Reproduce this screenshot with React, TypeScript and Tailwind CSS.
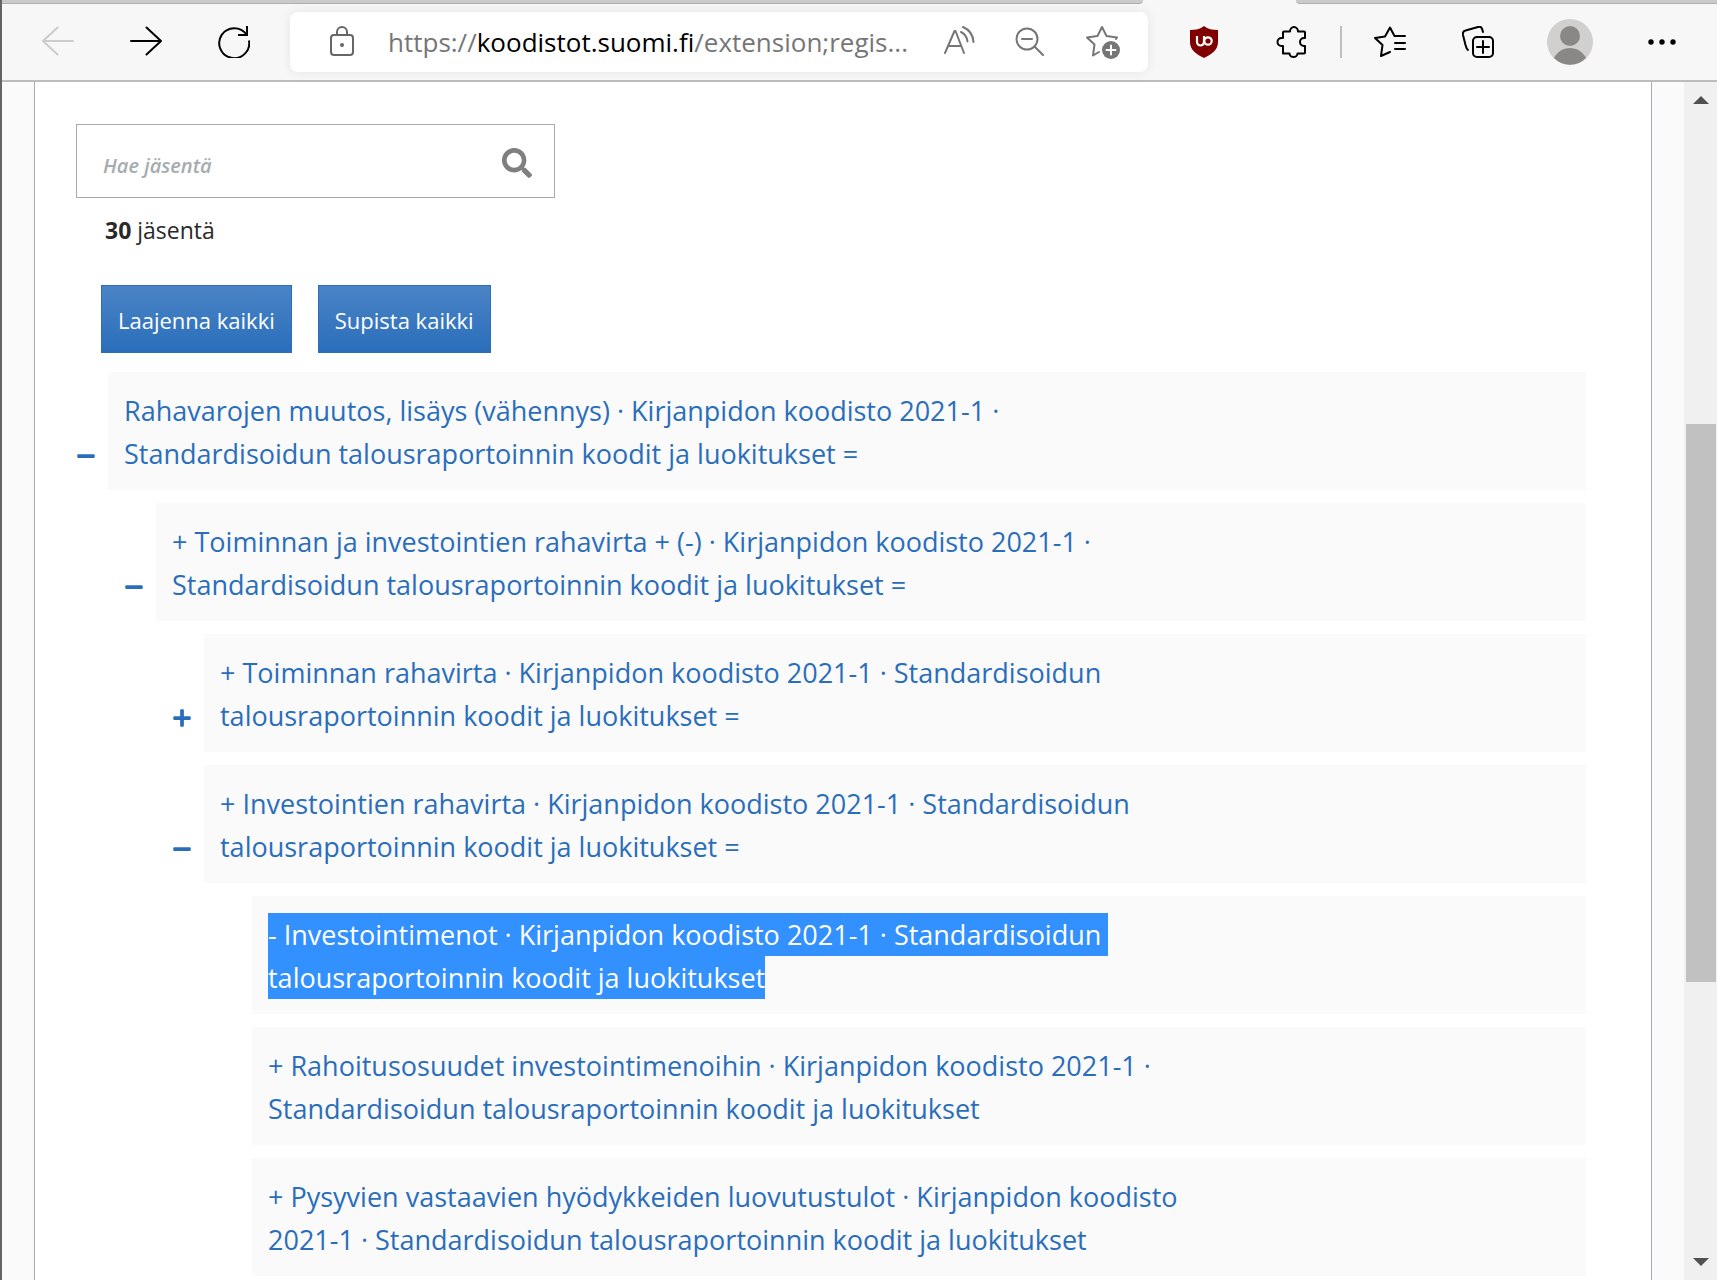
import React from "react";
import { FaMinus, FaPlus, FaSearch } from "react-icons/fa";

type Member = {
  level: number;
  label: string;
  state?: "open" | "closed";
  selected?: string[];
};

const members: Member[] = [
  {
    level: 0,
    state: "open",
    label:
      "Rahavarojen muutos, lisäys (vähennys) · Kirjanpidon koodisto 2021-1 · Standardisoidun talousraportoinnin koodit ja luokitukset =",
  },
  {
    level: 1,
    state: "open",
    label:
      "+ Toiminnan ja investointien rahavirta + (-) · Kirjanpidon koodisto 2021-1 · Standardisoidun talousraportoinnin koodit ja luokitukset =",
  },
  {
    level: 2,
    state: "closed",
    label:
      "+ Toiminnan rahavirta · Kirjanpidon koodisto 2021-1 · Standardisoidun talousraportoinnin koodit ja luokitukset =",
  },
  {
    level: 2,
    state: "open",
    label:
      "+ Investointien rahavirta · Kirjanpidon koodisto 2021-1 · Standardisoidun talousraportoinnin koodit ja luokitukset =",
  },
  {
    level: 3,
    label: "",
    selected: [
      "- Investointimenot · Kirjanpidon koodisto 2021-1 · Standardisoidun ",
      "talousraportoinnin koodit ja luokitukset",
    ],
  },
  {
    level: 3,
    label:
      "+ Rahoitusosuudet investointimenoihin · Kirjanpidon koodisto 2021-1 · Standardisoidun talousraportoinnin koodit ja luokitukset",
  },
  {
    level: 3,
    label:
      "+ Pysyvien vastaavien hyödykkeiden luovutustulot · Kirjanpidon koodisto 2021-1 · Standardisoidun talousraportoinnin koodit ja luokitukset",
  },
];

const indents = ["pl-0", "pl-12", "pl-24", "pl-36"];

function ToolButton({
  label,
  className = "w-[88px]",
  children,
}: {
  label: string;
  className?: string;
  children: React.ReactNode;
}) {
  return (
    <button
      type="button"
      aria-label={label}
      className={`flex h-12 shrink-0 items-center justify-center ${className}`}
    >
      {children}
    </button>
  );
}

function Icon({ children, className = "size-8" }: { children: React.ReactNode; className?: string }) {
  return (
    <svg
      viewBox="0 0 32 32"
      className={className}
      fill="none"
      stroke="currentColor"
      strokeWidth="2"
      strokeLinecap="round"
      strokeLinejoin="round"
    >
      {children}
    </svg>
  );
}

function Toolbar() {
  return (
    <header className="border-b-2 border-[#bcbcbc] bg-[#f7f7f7]">
      {/* bottom edge of the tab strip */}
      <div className="flex h-1">
        <div className="flex-1 rounded-br-md border-b border-[#b0b0b0] bg-[#cacaca]" />
        <div className="w-[153px]" />
        <div className="w-[421px] rounded-bl-md border-b border-[#b0b0b0] bg-[#cacaca]" />
      </div>

      <div className="flex h-[76px] items-center pr-[11px] pl-3 text-black">
        <ToolButton label="Takaisin">
          <Icon className="size-8 text-[#cccccc]">
            <path d="M31 15H1M15.500 1.500L1 15l14.500 13.500" />
          </Icon>
        </ToolButton>
        <ToolButton label="Eteenpäin">
          <Icon>
            <path d="M1 15h30M16.500 1.500L31 15 16.500 28.500" />
          </Icon>
        </ToolButton>
        <ToolButton label="Päivitä">
          <Icon>
            <path
              d="M31 14.500A15 15 0 1 1 28.500 8.500M29 0v9h-9"
              strokeLinecap="butt"
              strokeLinejoin="miter"
            />
          </Icon>
        </ToolButton>

        <div className="mx-3 flex h-15 min-w-0 flex-1 items-center rounded-lg bg-white pr-[9px] pl-10 text-[#767676] shadow-[0_0_12px_rgba(0,0,0,0.08)]">
          <svg
            viewBox="0 0 24 32"
            className="h-8 w-6 shrink-0 text-[#666666]"
            fill="none"
            stroke="currentColor"
            strokeWidth="2"
          >
            <rect x="1" y="9" width="22" height="20" rx="3" />
            <path d="M7 9V6a5 5 0 0 1 10 0v3" />
            <circle cx="12" cy="19" r="2" fill="currentColor" stroke="none" />
          </svg>
          <p className="ml-[34px] flex-1 truncate text-[26px] leading-9">
            https://<span className="text-black">koodistot.suomi.fi</span>/extension;regis...
          </p>
          <ToolButton label="Lue ääneen" className="w-18">
            <Icon>
              <path d="M2 27L11.500 5h1L21 27M5 20h13" />
              <path d="M18 6c4 2 6 5 6.500 9.500M20 1c6 2.500 10 8 10.500 15" />
            </Icon>
          </ToolButton>
          <ToolButton label="Loitonna" className="w-18">
            <Icon>
              <circle cx="12" cy="13" r="10.500" />
              <path d="M19.500 20.500L28 29M7 13h10" />
            </Icon>
          </ToolButton>
          <ToolButton label="Lisää suosikkeihin" className="w-18">
            <svg
              viewBox="0 0 34 34"
              className="size-[34px]"
              fill="none"
              stroke="currentColor"
              strokeWidth="2"
              strokeLinejoin="round"
              strokeLinecap="round"
            >
              <path d="M13 27l-6 3.500 1.500-11L1 12.500l10.500-1.500L16 2l4.500 9L31 12.500l-1 1.500" />
              <circle cx="25" cy="25" r="9" fill="currentColor" stroke="none" />
              <path d="M25 20.500v9M20.500 25h9" stroke="white" />
            </svg>
          </ToolButton>
        </div>

        <ToolButton label="uBlock Origin">
          <svg viewBox="0 0 28 32" className="h-8 w-7" fill="none">
            <path d="M14 0c4 3 8 4 14 4v12c0 8-6 12-14 16C6 28 0 24 0 16V4c6 0 10-1 14-4z" fill="#800000" />
            <path d="M7 10v6a3.500 3.500 0 0 0 7 0v-6" stroke="white" strokeWidth="2.200" />
            <circle cx="18" cy="15" r="3.700" stroke="white" strokeWidth="2.200" />
          </svg>
        </ToolButton>
        <ToolButton label="Laajennukset">
          <Icon>
            <path d="M8 5.500h6a4 4.500 0 0 1 8 0h6q1 0 1 1V12h-1a4 4 0 0 0 0 8h1v6.500q0 1-1 1h-6.500a4 3.500 0 0 1-8 0H7V20H5.500a4 4 0 0 1 0-8H7V6.500q0-1 1-1z" />
          </Icon>
        </ToolButton>
        <div className="mx-1 h-8 w-0.5 bg-[#bfbfbf]" />
        <ToolButton label="Suosikit">
          <Icon>
            <path d="M16 26l-9 4 1.500-11L1 12l10-1.500L16 1.500l4.500 8.500H31M21 17h10M21 23h10" />
          </Icon>
        </ToolButton>
        <ToolButton label="Kokoelmat">
          <Icon>
            <path d="M6 24c-1.500-1-2-3-2.500-5L1 9c-.5-2.500.5-4 2.500-4.500L16 1c3-.8 4 .5 5 5" />
            <rect x="11" y="11" width="20" height="20" rx="4" />
            <path d="M21 15v12M15 21h12" />
          </Icon>
        </ToolButton>
        <ToolButton label="Profiili" className="w-24">
          <svg viewBox="0 0 46 46" className="size-[46px]">
            <circle cx="23" cy="23" r="23" fill="#d2d0ce" />
            <circle cx="23" cy="17" r="10" fill="#8a8886" />
            <path d="M7 39c3-6 9-10 16-10s13 4 16 10a22.500 22.500 0 0 1-32 0z" fill="#8a8886" />
          </svg>
        </ToolButton>
        <ToolButton label="Asetukset ja muuta">
          <svg viewBox="0 0 32 32" className="size-8" fill="currentColor">
            <circle cx="5" cy="16" r="2.700" />
            <circle cx="16" cy="16" r="2.700" />
            <circle cx="27" cy="16" r="2.700" />
          </svg>
        </ToolButton>
      </div>
    </header>
  );
}

function MemberRow({ member }: { member: Member }) {
  return (
    <li className={`flex ${indents[member.level]}`}>
      <div className="flex w-8 shrink-0 items-center pt-[50px]">
        {member.state && (
          <button
            type="button"
            aria-label={member.state === "open" ? "Supista" : "Laajenna"}
            className="text-[#2a6ebb]"
          >
            {member.state === "open" ? <FaMinus className="size-5" /> : <FaPlus className="size-5" />}
          </button>
        )}
      </div>
      <div className="flex-1 bg-[#fafafa] px-4 pt-[17px] pb-[15px] text-[27px] leading-[43px]">
        <a href="#" className="block max-w-[940px] text-[#2a6ebb]">
          {member.selected
            ? member.selected.map((line) => (
                <span key={line} className="block w-fit bg-[#3390ff] whitespace-pre text-white">
                  {line}
                </span>
              ))
            : member.label}
        </a>
      </div>
    </li>
  );
}

function Scrollbar() {
  return (
    <div className="flex w-[33px] shrink-0 flex-col items-center bg-[#f0f0f0] py-3.5">
      <svg viewBox="0 0 16 8" className="h-2 w-4" fill="#505050">
        <path d="M0 8l8-8 8 8z" />
      </svg>
      <div className="flex w-full flex-1 flex-col pr-px pl-0.5">
        <div className="flex-[320]" />
        <div className="flex-[558] bg-[#c1c1c1]" />
        <div className="flex-[276]" />
      </div>
      <svg viewBox="0 0 16 8" className="h-2 w-4" fill="#505050">
        <path d="M0 0l8 8 8-8z" />
      </svg>
    </div>
  );
}

export default function App() {
  return (
    <div className="flex h-screen flex-col overflow-hidden border-l-2 border-[#646464] bg-white font-['Open_Sans','Noto_Sans',sans-serif]">
      <Toolbar />

      <div className="flex min-h-0 flex-1">
        <main className="min-w-0 flex-1 overflow-hidden bg-[#fafafa] px-8">
          <div className="min-h-full border-x border-[#a5acb0] bg-white pt-[42px] pr-[65px] pl-[41px]">
            <div className="flex h-[74px] w-[479px] items-center border border-[#a5acb0] pr-[22px] pl-[26px]">
              <input
                type="text"
                aria-label="Hae jäsentä"
                placeholder="Hae jäsentä"
                className="h-full min-w-0 flex-1 pt-2 text-xl font-semibold italic outline-none placeholder:text-[#a5acb0]"
              />
              <FaSearch className="mt-1 size-[30px] text-[#7f7f7f]" />
            </div>

            <p className="mt-4 ml-[29px] text-[23px] leading-8 text-[#292929]">
              <span className="font-bold">30</span> jäsentä
            </p>

            <div className="mt-[39px] ml-[25px] flex gap-[26px]">
              <button
                type="button"
                className="h-[68px] border border-[#2a6ebb] bg-linear-to-b from-[#4a84c6] to-[#2a6ebb] px-4 pt-0.5 text-[22px] text-white"
              >
                Laajenna kaikki
              </button>
              <button
                type="button"
                className="h-[68px] border border-[#2a6ebb] bg-linear-to-b from-[#4a84c6] to-[#2a6ebb] px-4 pt-0.5 text-[22px] text-white"
              >
                Supista kaikki
              </button>
            </div>

            <ul className="mt-[19px] flex flex-col gap-[13px]">
              {members.map((member, i) => (
                <MemberRow key={i} member={member} />
              ))}
            </ul>
          </div>
        </main>
        <Scrollbar />
      </div>
    </div>
  );
}
